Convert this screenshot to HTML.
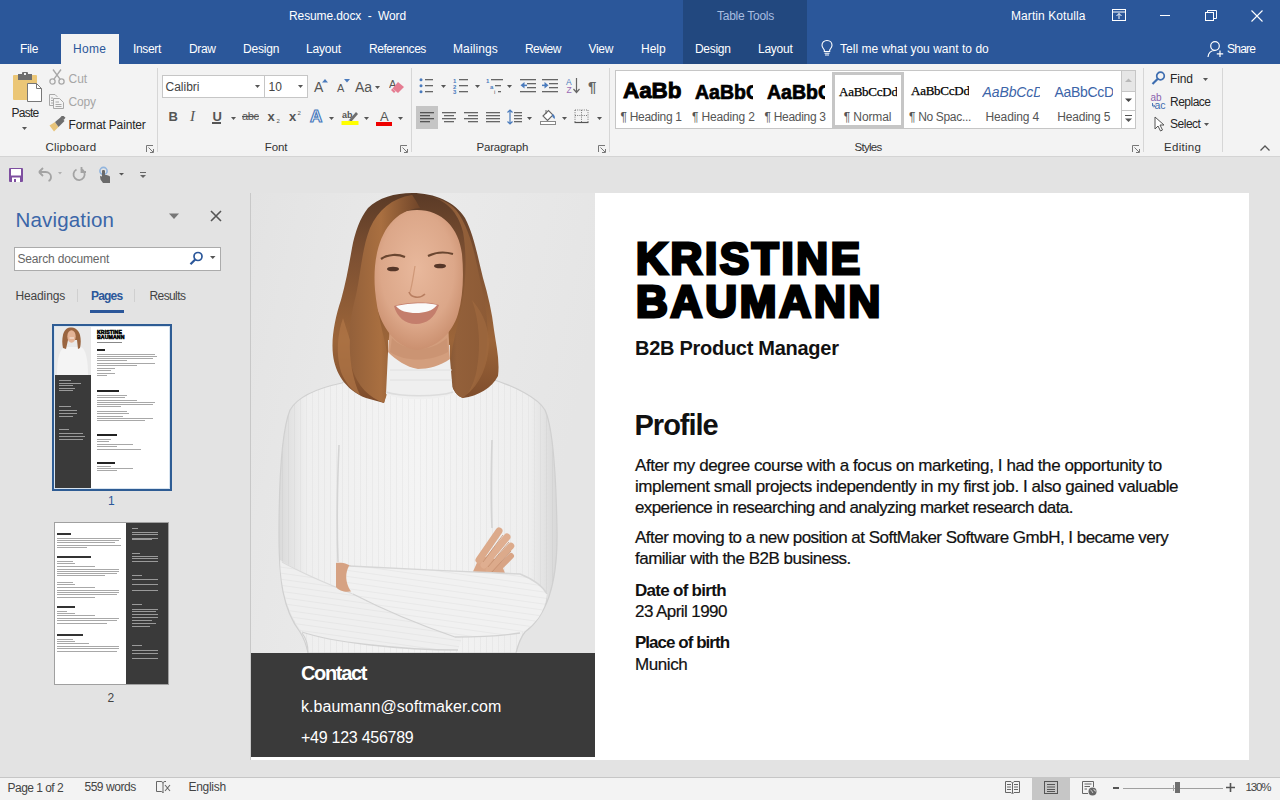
<!DOCTYPE html><html><head><meta charset="utf-8"><style>
html,body{margin:0;padding:0;width:1280px;height:800px;overflow:hidden;position:relative;background:#e3e3e3;font-family:"Liberation Sans",sans-serif;}
.t{position:absolute;white-space:nowrap;font-family:"Liberation Sans",sans-serif;}
.r{position:absolute;display:block;}
</style></head><body>
<div class="r" style="left:0px;top:0px;width:1280px;height:64px;background:#2b579a;"></div>
<div class="r" style="left:683px;top:0px;width:124px;height:64px;background:#22487f;"></div>
<div class="r" style="left:0px;top:64px;width:1280px;height:92px;background:#f3f3f3;"></div>
<div class="r" style="left:0px;top:156px;width:1280px;height:1px;background:#d4d4d4;"></div>
<div class="r" style="left:0px;top:157px;width:1280px;height:620px;background:#e3e3e3;"></div>
<div class="r" style="left:0px;top:777px;width:1280px;height:1px;background:#c6c6c6;"></div>
<div class="r" style="left:0px;top:778px;width:1280px;height:22px;background:#f3f3f3;"></div>
<div class="t" style="left:289px;top:9.84px;font-size:12px;line-height:12px;color:#fff;font-weight:normal;letter-spacing:-0.105px;">Resume.docx&nbsp; -&nbsp; Word</div>
<div class="t" style="left:717px;top:9.84px;font-size:12px;line-height:12px;color:#a8bde0;font-weight:normal;letter-spacing:-0.260px;">Table Tools</div>
<div class="t" style="left:1011px;top:9.84px;font-size:12px;line-height:12px;color:#fff;font-weight:normal;letter-spacing:0.077px;">Martin Kotulla</div>
<svg class="r" style="left:1112px;top:9px;" width="14" height="12" viewBox="0 0 14 12"><rect x="0.5" y="0.5" width="13" height="11" fill="none" stroke="#fff"/><line x1="0.5" y1="3" x2="13.5" y2="3" stroke="#fff"/><path d="M7 4.5 L4.5 7 M7 4.5 L9.5 7 M7 4.5 V10" stroke="#fff" fill="none"/></svg>
<div class="r" style="left:1160px;top:15px;width:10px;height:1px;background:#fff;"></div>
<svg class="r" style="left:1205px;top:10px;" width="12" height="11" viewBox="0 0 12 11"><rect x="0.5" y="2.5" width="8" height="8" fill="none" stroke="#fff"/><path d="M2.5 2.5 V0.5 H11.5 V8.5 H8.5" fill="none" stroke="#fff"/></svg>
<svg class="r" style="left:1251px;top:10px;" width="12" height="12" viewBox="0 0 12 12"><path d="M0.5 0.5 L11.5 11.5 M11.5 0.5 L0.5 11.5" stroke="#fff" stroke-width="1.1"/></svg>
<div class="r" style="left:61px;top:34px;width:58px;height:30px;background:#f3f3f3;"></div>
<div class="t" style="left:20px;top:42.84px;font-size:12px;line-height:12px;color:#fff;font-weight:normal;letter-spacing:-0.333px;">File</div>
<div class="t" style="left:73px;top:42.84px;font-size:12px;line-height:12px;color:#2b579a;font-weight:normal;letter-spacing:0.333px;">Home</div>
<div class="t" style="left:133px;top:42.84px;font-size:12px;line-height:12px;color:#fff;font-weight:normal;letter-spacing:-0.340px;">Insert</div>
<div class="t" style="left:189px;top:42.84px;font-size:12px;line-height:12px;color:#fff;font-weight:normal;letter-spacing:-0.333px;">Draw</div>
<div class="t" style="left:243px;top:42.84px;font-size:12px;line-height:12px;color:#fff;font-weight:normal;letter-spacing:-0.200px;">Design</div>
<div class="t" style="left:306px;top:42.84px;font-size:12px;line-height:12px;color:#fff;font-weight:normal;letter-spacing:-0.200px;">Layout</div>
<div class="t" style="left:369px;top:42.84px;font-size:12px;line-height:12px;color:#fff;font-weight:normal;letter-spacing:-0.444px;">References</div>
<div class="t" style="left:453px;top:42.84px;font-size:12px;line-height:12px;color:#fff;font-weight:normal;letter-spacing:0.105px;">Mailings</div>
<div class="t" style="left:525px;top:42.84px;font-size:12px;line-height:12px;color:#fff;font-weight:normal;letter-spacing:-0.600px;">Review</div>
<div class="t" style="left:588.5px;top:42.84px;font-size:12px;line-height:12px;color:#fff;font-weight:normal;letter-spacing:-0.333px;">View</div>
<div class="t" style="left:641px;top:42.84px;font-size:12px;line-height:12px;color:#fff;font-weight:normal;letter-spacing:0.000px;">Help</div>
<div class="t" style="left:695px;top:42.84px;font-size:12px;line-height:12px;color:#fff;font-weight:normal;letter-spacing:-0.300px;">Design</div>
<div class="t" style="left:758px;top:42.84px;font-size:12px;line-height:12px;color:#fff;font-weight:normal;letter-spacing:-0.250px;">Layout</div>
<svg class="r" style="left:820px;top:39px;" width="14" height="17" viewBox="0 0 14 17"><path d="M7 1.5 C3.8 1.5 2 3.8 2 6.3 C2 8.5 3.6 9.6 4.3 11 V12.5 H9.7 V11 C10.4 9.6 12 8.5 12 6.3 C12 3.8 10.2 1.5 7 1.5 Z" fill="none" stroke="#fff" stroke-width="1.1"/><path d="M4.5 14.2 H9.5 M5 16 H9" stroke="#fff" stroke-width="1.1"/></svg>
<div class="t" style="left:840px;top:42.84px;font-size:12px;line-height:12px;color:#fff;font-weight:normal;letter-spacing:0.027px;">Tell me what you want to do</div>
<svg class="r" style="left:1207px;top:40px;" width="17" height="18" viewBox="0 0 17 18"><circle cx="8" cy="6" r="4.3" fill="none" stroke="#fff" stroke-width="1.2"/><path d="M1 17 C1.5 12.5 4 10.5 8 10.5" fill="none" stroke="#fff" stroke-width="1.2"/><path d="M13 10.5 V17 M9.8 13.8 H16.2" stroke="#fff" stroke-width="1.2"/></svg>
<div class="t" style="left:1227px;top:42.84px;font-size:12px;line-height:12px;color:#fff;font-weight:normal;letter-spacing:-0.750px;">Share</div>
<svg class="r" style="left:12px;top:71px;" width="31" height="32" viewBox="0 0 31 32"><rect x="1" y="4" width="24" height="25" rx="1" fill="#ebc676"/><rect x="6" y="3" width="14" height="6" fill="#6e6e6e"/><rect x="10" y="1" width="6" height="4" rx="1" fill="#6e6e6e"/><rect x="12" y="2" width="2" height="2" fill="#f1f1f1"/><path d="M15.5 12.5 H24.5 L29.5 17.5 V30.5 H15.5 Z" fill="#fff" stroke="#777"/><path d="M24.5 12.5 V17.5 H29.5" fill="none" stroke="#777"/></svg>
<div class="t" style="left:11.5px;top:106.84px;font-size:12px;line-height:12px;color:#262626;font-weight:normal;letter-spacing:-0.750px;">Paste</div>
<svg class="r" style="left:22px;top:127px;" width="5" height="3" viewBox="0 0 5 3"><path d="M0 0 H5 L2.5 3 Z" fill="#555"/></svg>
<svg class="r" style="left:49px;top:69px;" width="16" height="16" viewBox="0 0 16 16"><circle cx="3.5" cy="12.5" r="2.6" fill="none" stroke="#a8a8a8" stroke-width="1.3"/><circle cx="12.5" cy="12.5" r="2.6" fill="none" stroke="#a8a8a8" stroke-width="1.3"/><path d="M4.8 10.3 L12 0.5 M11.2 10.3 L4 0.5" stroke="#a8a8a8" stroke-width="1.4"/></svg>
<div class="t" style="left:68.5px;top:72.84px;font-size:12px;line-height:12px;color:#a6a6a6;font-weight:normal;letter-spacing:0.000px;">Cut</div>
<svg class="r" style="left:48px;top:93px;" width="17" height="16" viewBox="0 0 17 16"><path d="M1.5 1.5 H7 L9 3.5 V4 M1.5 1.5 V12.5 H5" fill="none" stroke="#a8a8a8"/><path d="M5.5 5.5 H11.5 L15.5 9.5 V15.5 H5.5 Z" fill="none" stroke="#a8a8a8"/><path d="M3 5 H5 M3 7.5 H5 M3 10 H5 M7.5 9 H11 M7.5 11.5 H13.5 M7.5 13.5 H13.5" stroke="#a8a8a8"/></svg>
<div class="t" style="left:68.5px;top:95.84px;font-size:12px;line-height:12px;color:#a6a6a6;font-weight:normal;letter-spacing:-0.199px;">Copy</div>
<svg class="r" style="left:49px;top:116px;" width="17" height="16" viewBox="0 0 17 16"><path d="M0.5 9.5 L6 6 L9.5 11 L5 15.5 Z" fill="#e8c47a"/><path d="M6 6 L12 1 L15.5 5 L9.5 11 Z" fill="#6e6e6e"/><rect x="12" y="0" width="4" height="3" fill="#6e6e6e" transform="rotate(40 14 1.5)"/></svg>
<div class="t" style="left:68.5px;top:118.84px;font-size:12px;line-height:12px;color:#262626;font-weight:normal;letter-spacing:-0.154px;">Format Painter</div>
<div class="t" style="left:45.5px;top:142.27px;font-size:11.5px;line-height:11.5px;color:#333;font-weight:normal;letter-spacing:0.175px;">Clipboard</div>
<svg class="r" style="left:146px;top:145px;" width="8" height="8" viewBox="0 0 8 8"><path d="M0.5 7 V0.5 H7" fill="none" stroke="#777"/><path d="M2.5 2.5 L7 7 M4 7.5 H7.5 V4" fill="none" stroke="#777"/></svg>
<div class="r" style="left:157px;top:68px;width:1px;height:84px;background:#d6d6d6;"></div>
<div class="r" style="left:162px;top:75px;width:146px;height:23px;background:#fff;box-sizing:border-box;border:1px solid #c6c6c6;"></div>
<div class="r" style="left:264px;top:75px;width:1px;height:23px;background:#c6c6c6;"></div>
<div class="t" style="left:165.5px;top:80.84px;font-size:12px;line-height:12px;color:#444;font-weight:normal;">Calibri</div>
<svg class="r" style="left:255px;top:85px;" width="5" height="3" viewBox="0 0 5 3"><path d="M0 0 H5 L2.5 3 Z" fill="#555"/></svg>
<div class="t" style="left:268.5px;top:80.84px;font-size:12px;line-height:12px;color:#444;font-weight:normal;">10</div>
<svg class="r" style="left:298px;top:85px;" width="5" height="3" viewBox="0 0 5 3"><path d="M0 0 H5 L2.5 3 Z" fill="#555"/></svg>
<div class="t" style="left:314px;top:80.15px;font-size:14px;line-height:14px;color:#555;font-weight:normal;">A</div>
<svg class="r" style="left:322px;top:79px;" width="6" height="4" viewBox="0 0 6 4"><path d="M0 3.5 L3 0 L6 3.5 Z" fill="#4a7bbd"/></svg>
<div class="t" style="left:337px;top:82.69px;font-size:11px;line-height:11px;color:#555;font-weight:normal;">A</div>
<svg class="r" style="left:343.5px;top:79px;" width="6" height="4" viewBox="0 0 6 4"><path d="M0 0 L6 0 L3 3.5 Z" fill="#4a7bbd"/></svg>
<div class="t" style="left:355px;top:80.15px;font-size:14px;line-height:14px;color:#555;font-weight:normal;">Aa</div>
<svg class="r" style="left:375px;top:85.5px;" width="5" height="3" viewBox="0 0 5 3"><path d="M0 0 H5 L2.5 3 Z" fill="#555"/></svg>
<svg class="r" style="left:389px;top:78px;" width="16" height="16" viewBox="0 0 16 16"><text x="0" y="10" font-family="Liberation Sans" font-size="11" fill="#555">A</text><path d="M9 4 L15 9 L9 15 L3.5 10.5 Z" fill="#e57c91"/><path d="M3.5 10.5 L6.5 13.5 L5 15 L2 12 Z" fill="#e57c91"/></svg>
<div class="r" style="left:411px;top:68px;width:1px;height:84px;background:#d6d6d6;"></div>
<div class="t" style="left:168.5px;top:110.00px;font-size:13px;line-height:13px;color:#555;font-weight:bold;">B</div>
<div class="t" style="left:190px;top:109px;font:italic 15px/15px 'Liberation Serif';color:#555;">I</div>
<div class="t" style="left:212.5px;top:110.00px;font-size:13px;line-height:13px;color:#555;font-weight:bold;">U</div>
<div class="r" style="left:212px;top:122px;width:9px;height:1.5px;background:#555;"></div>
<svg class="r" style="left:231px;top:117px;" width="5" height="3" viewBox="0 0 5 3"><path d="M0 0 H5 L2.5 3 Z" fill="#555"/></svg>
<svg class="r" style="left:242px;top:111px;" width="18" height="11" viewBox="0 0 18 11"><text x="0" y="9" font-family="Liberation Sans" font-size="11" fill="#555" textLength="17">abc</text><path d="M0 5.5 H17" stroke="#555" stroke-width="1.2"/></svg>
<div class="t" style="left:267.5px;top:110.00px;font-size:13px;line-height:13px;color:#555;font-weight:bold;">x</div>
<div class="t" style="left:276.5px;top:118.42px;font-size:6px;line-height:6px;color:#555;font-weight:normal;">2</div>
<div class="t" style="left:289px;top:110.00px;font-size:13px;line-height:13px;color:#555;font-weight:bold;">x</div>
<div class="t" style="left:297.5px;top:110.42px;font-size:6px;line-height:6px;color:#555;font-weight:normal;">2</div>
<svg class="r" style="left:309px;top:108px;" width="16" height="16" viewBox="0 0 16 16"><text x="1" y="14" font-family="Liberation Sans" font-size="17" font-weight="bold" fill="#fff" stroke="#4a7bbd" stroke-width="1.2">A</text></svg>
<svg class="r" style="left:329px;top:116.5px;" width="5" height="3" viewBox="0 0 5 3"><path d="M0 0 H5 L2.5 3 Z" fill="#555"/></svg>
<svg class="r" style="left:341px;top:109px;" width="19" height="17" viewBox="0 0 19 17"><text x="1" y="9" font-family="Liberation Sans" font-size="9" font-weight="bold" fill="#555">ab</text><path d="M8 11 L15 3 L17 5 L10 13 Z" fill="#6e6e6e"/><path d="M7.5 11.5 L9.5 13 L7 13.5 Z" fill="#6e6e6e"/><rect x="0.5" y="12" width="17" height="4" fill="#ffff00"/></svg>
<svg class="r" style="left:364px;top:116.5px;" width="5" height="3" viewBox="0 0 5 3"><path d="M0 0 H5 L2.5 3 Z" fill="#555"/></svg>
<div class="t" style="left:380px;top:110.00px;font-size:13px;line-height:13px;color:#555;font-weight:normal;">A</div>
<div class="r" style="left:376px;top:121.5px;width:16px;height:4px;background:#e00;"></div>
<svg class="r" style="left:398px;top:116.5px;" width="5" height="3" viewBox="0 0 5 3"><path d="M0 0 H5 L2.5 3 Z" fill="#555"/></svg>
<svg class="r" style="left:400px;top:145px;" width="8" height="8" viewBox="0 0 8 8"><path d="M0.5 7 V0.5 H7" fill="none" stroke="#777"/><path d="M2.5 2.5 L7 7 M4 7.5 H7.5 V4" fill="none" stroke="#777"/></svg>
<div class="t" style="left:264.75px;top:142.27px;font-size:11.5px;line-height:11.5px;color:#333;font-weight:normal;letter-spacing:-0.082px;">Font</div>
<svg class="r" style="left:419px;top:78px;" width="15" height="16" viewBox="0 0 15 16"><circle cx="2" cy="1.8" r="1.5" fill="#4a7bbd"/><circle cx="2" cy="7.8" r="1.5" fill="#4a7bbd"/><circle cx="2" cy="13.8" r="1.5" fill="#4a7bbd"/><rect x="6" y="1" width="8" height="1.3" fill="#666"/><rect x="6" y="7" width="8" height="1.3" fill="#666"/><rect x="6" y="13" width="8" height="1.3" fill="#666"/></svg>
<svg class="r" style="left:441px;top:85px;" width="5" height="3" viewBox="0 0 5 3"><path d="M0 0 H5 L2.5 3 Z" fill="#555"/></svg>
<svg class="r" style="left:452px;top:77px;" width="17" height="17" viewBox="0 0 17 17"><text x="1" y="6" font-family="Liberation Sans" font-size="6" font-weight="bold" fill="#4a7bbd">1</text><text x="1" y="12" font-family="Liberation Sans" font-size="6" font-weight="bold" fill="#4a7bbd">2</text><text x="1" y="17" font-family="Liberation Sans" font-size="6" font-weight="bold" fill="#4a7bbd">3</text><rect x="7" y="2" width="9" height="1.3" fill="#666"/><rect x="7" y="8" width="9" height="1.3" fill="#666"/><rect x="7" y="14" width="9" height="1.3" fill="#666"/></svg>
<svg class="r" style="left:475px;top:85px;" width="5" height="3" viewBox="0 0 5 3"><path d="M0 0 H5 L2.5 3 Z" fill="#555"/></svg>
<svg class="r" style="left:486px;top:77px;" width="18" height="17" viewBox="0 0 18 17"><text x="0" y="6" font-family="Liberation Sans" font-size="6" font-weight="bold" fill="#4a7bbd">1</text><text x="4" y="12" font-family="Liberation Sans" font-size="6" font-weight="bold" fill="#4a7bbd">a</text><text x="8" y="17" font-family="Liberation Sans" font-size="6" fill="#555">i</text><rect x="5" y="2" width="12" height="1.3" fill="#666"/><rect x="9" y="8" width="6" height="1.3" fill="#666"/><rect x="12" y="14" width="3" height="1.3" fill="#666"/></svg>
<svg class="r" style="left:507px;top:85px;" width="5" height="3" viewBox="0 0 5 3"><path d="M0 0 H5 L2.5 3 Z" fill="#555"/></svg>
<svg class="r" style="left:520px;top:78px;" width="17" height="15" viewBox="0 0 17 15"><rect x="0" y="1" width="16" height="1.3" fill="#666"/><rect x="7" y="5" width="9" height="1.3" fill="#666"/><rect x="7" y="9" width="9" height="1.3" fill="#666"/><rect x="0" y="13" width="16" height="1.3" fill="#666"/><path d="M0.5 7.3 L4.5 4 V10.5 Z" fill="#4a7bbd"/><rect x="3" y="6.6" width="4" height="1.5" fill="#4a7bbd"/></svg>
<svg class="r" style="left:541.5px;top:78px;" width="17" height="15" viewBox="0 0 17 15"><rect x="0" y="1" width="16" height="1.3" fill="#666"/><rect x="7" y="5" width="9" height="1.3" fill="#666"/><rect x="7" y="9" width="9" height="1.3" fill="#666"/><rect x="0" y="13" width="16" height="1.3" fill="#666"/><path d="M6.5 7.3 L2.5 4 V10.5 Z" fill="#4a7bbd"/><rect x="0" y="6.6" width="4" height="1.5" fill="#4a7bbd"/></svg>
<svg class="r" style="left:565px;top:77px;" width="16" height="17" viewBox="0 0 16 17"><text x="1" y="7.5" font-family="Liberation Sans" font-size="8.5" fill="#4a7bbd">A</text><text x="1.5" y="16" font-family="Liberation Sans" font-size="8.5" fill="#9b6bb5">Z</text><path d="M11.5 1 V15 M8.5 12 L11.5 15.5 L14.5 12" fill="none" stroke="#666" stroke-width="1.2"/></svg>
<div class="t" style="left:588px;top:79.30px;font-size:15px;line-height:15px;color:#666;font-weight:bold;">&#182;</div>
<div class="r" style="left:416px;top:106px;width:22px;height:23px;background:#c5c5c5;"></div>
<svg class="r" style="left:420px;top:112px;" width="15" height="11" viewBox="0 0 15 11"><rect x="0" y="0" width="14" height="1.3" fill="#555"/><rect x="0" y="3" width="10" height="1.3" fill="#555"/><rect x="0" y="6" width="14" height="1.3" fill="#555"/><rect x="0" y="9" width="10" height="1.3" fill="#555"/></svg>
<svg class="r" style="left:442px;top:112px;" width="15" height="11" viewBox="0 0 15 11"><rect x="0" y="0" width="14" height="1.3" fill="#666"/><rect x="2" y="3" width="10" height="1.3" fill="#666"/><rect x="0" y="6" width="14" height="1.3" fill="#666"/><rect x="2" y="9" width="10" height="1.3" fill="#666"/></svg>
<svg class="r" style="left:464px;top:112px;" width="15" height="11" viewBox="0 0 15 11"><rect x="0" y="0" width="14" height="1.3" fill="#666"/><rect x="4" y="3" width="10" height="1.3" fill="#666"/><rect x="0" y="6" width="14" height="1.3" fill="#666"/><rect x="4" y="9" width="10" height="1.3" fill="#666"/></svg>
<svg class="r" style="left:486px;top:112px;" width="15" height="11" viewBox="0 0 15 11"><rect x="0" y="0" width="14" height="1.3" fill="#666"/><rect x="0" y="3" width="14" height="1.3" fill="#666"/><rect x="0" y="6" width="14" height="1.3" fill="#666"/><rect x="0" y="9" width="14" height="1.3" fill="#666"/></svg>
<svg class="r" style="left:507px;top:109px;" width="16" height="17" viewBox="0 0 16 17"><path d="M3 1 V15 M0.5 3.5 L3 1 L5.5 3.5 M0.5 12.5 L3 15 L5.5 12.5" fill="none" stroke="#4a7bbd" stroke-width="1.2"/><rect x="7" y="3" width="8" height="1.3" fill="#666"/><rect x="7" y="6" width="8" height="1.3" fill="#666"/><rect x="7" y="9" width="8" height="1.3" fill="#666"/><rect x="7" y="12" width="8" height="1.3" fill="#666"/></svg>
<svg class="r" style="left:527px;top:116.5px;" width="5" height="3" viewBox="0 0 5 3"><path d="M0 0 H5 L2.5 3 Z" fill="#555"/></svg>
<svg class="r" style="left:539px;top:108px;" width="19" height="18" viewBox="0 0 19 18"><path d="M4 8 L9.5 2.5 L14 7 L8.5 12.5 Z" fill="#fff" stroke="#666" stroke-width="1.1"/><path d="M7 2 V6" stroke="#666"/><path d="M13 6 C15.5 6.5 16.5 9 15.5 11 L13.5 9 Z" fill="#4a7bbd"/><rect x="1.5" y="13.5" width="15" height="3" fill="#fff" stroke="#888"/></svg>
<svg class="r" style="left:562px;top:116.5px;" width="5" height="3" viewBox="0 0 5 3"><path d="M0 0 H5 L2.5 3 Z" fill="#555"/></svg>
<svg class="r" style="left:574px;top:109px;" width="15" height="15" viewBox="0 0 15 15"><path d="M1 1 H14 M1 6.5 H14 M1 1 V13 M7.5 1 V13 M14 1 V13" fill="none" stroke="#777" stroke-dasharray="1 1.2"/><path d="M0.5 13.5 H14.5" stroke="#555" stroke-width="1.2"/></svg>
<svg class="r" style="left:596.5px;top:116.5px;" width="5" height="3" viewBox="0 0 5 3"><path d="M0 0 H5 L2.5 3 Z" fill="#555"/></svg>
<div class="t" style="left:476.6px;top:142.27px;font-size:11.5px;line-height:11.5px;color:#333;font-weight:normal;letter-spacing:-0.250px;">Paragraph</div>
<svg class="r" style="left:598px;top:145px;" width="8" height="8" viewBox="0 0 8 8"><path d="M0.5 7 V0.5 H7" fill="none" stroke="#777"/><path d="M2.5 2.5 L7 7 M4 7.5 H7.5 V4" fill="none" stroke="#777"/></svg>
<div class="r" style="left:609px;top:68px;width:1px;height:84px;background:#d6d6d6;"></div>
<div class="r" style="left:615px;top:70px;width:521px;height:59px;background:#fff;box-sizing:border-box;border:1px solid #c6c6c6;"></div>
<div class="r" style="left:832px;top:72px;width:72px;height:56px;background:transparent;box-sizing:border-box;border:3px solid #c6c6c6;"></div>
<div class="r" style="left:622px;top:76px;width:60px;height:28px;overflow:hidden;"><div class="t" style="left:1px;top:1px;font:bold 22.5px/28px 'Liberation Sans';color:#000;letter-spacing:-0.1px;-webkit-text-stroke:0.9px #000;">AaBb</div></div>
<div class="r" style="left:694px;top:76px;width:59px;height:28px;overflow:hidden;"><div class="t" style="left:1px;top:1.5px;font:bold 19.5px/28px 'Liberation Sans';color:#000;letter-spacing:0px;-webkit-text-stroke:0.7px #000;">AaBbC</div></div>
<div class="r" style="left:766px;top:76px;width:59px;height:28px;overflow:hidden;"><div class="t" style="left:1px;top:1.5px;font:bold 19.5px/28px 'Liberation Sans';color:#000;letter-spacing:0px;-webkit-text-stroke:0.7px #000;">AaBbC</div></div>
<div class="r" style="left:838px;top:80px;width:59px;height:22px;overflow:hidden;"><div class="t" style="left:1px;top:1px;font:13px/22px 'Liberation Serif';color:#000;letter-spacing:-0.25px;-webkit-text-stroke:0.25px #000;">AaBbCcDd</div></div>
<div class="r" style="left:910px;top:80px;width:59px;height:22px;overflow:hidden;"><div class="t" style="left:1px;top:0px;font:13px/22px 'Liberation Serif';color:#000;letter-spacing:-0.25px;-webkit-text-stroke:0.25px #000;">AaBbCcDd</div></div>
<div class="r" style="left:982px;top:80px;width:58px;height:22px;overflow:hidden;"><div class="t" style="left:0.5px;top:0.5px;font:italic 14px/22px 'Liberation Sans';color:#3b64a8;letter-spacing:-0.1px;">AaBbCcD</div></div>
<div class="r" style="left:1054px;top:80px;width:59px;height:22px;overflow:hidden;"><div class="t" style="left:0.5px;top:0.5px;font:14px/22px 'Liberation Sans';color:#3b64a8;letter-spacing:-0.3px;">AaBbCcDd</div></div>
<div class="t" style="left:620.5px;top:111.34px;font-size:12px;line-height:12px;color:#555;font-weight:normal;letter-spacing:-0.300px;">&#182; Heading 1</div>
<div class="t" style="left:692px;top:111.34px;font-size:12px;line-height:12px;color:#555;font-weight:normal;letter-spacing:-0.150px;">&#182; Heading 2</div>
<div class="t" style="left:764.5px;top:111.34px;font-size:12px;line-height:12px;color:#555;font-weight:normal;letter-spacing:-0.300px;">&#182; Heading 3</div>
<div class="t" style="left:843.75px;top:111.34px;font-size:12px;line-height:12px;color:#555;font-weight:normal;letter-spacing:-0.105px;">&#182; Normal</div>
<div class="t" style="left:909px;top:111.34px;font-size:12px;line-height:12px;color:#555;font-weight:normal;letter-spacing:-0.324px;">&#182; No Spac...</div>
<div class="t" style="left:985.5px;top:111.34px;font-size:12px;line-height:12px;color:#555;font-weight:normal;letter-spacing:-0.125px;">Heading 4</div>
<div class="t" style="left:1057.3px;top:111.34px;font-size:12px;line-height:12px;color:#555;font-weight:normal;letter-spacing:-0.208px;">Heading 5</div>
<div class="r" style="left:1121px;top:70px;width:15px;height:59px;background:#fff;box-sizing:border-box;border:1px solid #c6c6c6;"></div>
<div class="r" style="left:1122px;top:71px;width:13px;height:20px;background:#e6e6e6;"></div>
<div class="r" style="left:1121px;top:91px;width:15px;height:1px;background:#c6c6c6;"></div>
<div class="r" style="left:1121px;top:110px;width:15px;height:1px;background:#c6c6c6;"></div>
<svg class="r" style="left:1125px;top:78px;" width="8" height="5" viewBox="0 0 8 5"><path d="M0 4 L3.5 0.5 L7 4 Z" fill="#b8b8b8"/></svg>
<svg class="r" style="left:1125px;top:98px;" width="8" height="5" viewBox="0 0 8 5"><path d="M0 0.5 L7 0.5 L3.5 4 Z" fill="#444"/></svg>
<svg class="r" style="left:1124px;top:115px;" width="9" height="9" viewBox="0 0 9 9"><rect x="1" y="0" width="7" height="1" fill="#555"/><path d="M1 3.5 L8 3.5 L4.5 7 Z" fill="#555"/></svg>
<div class="t" style="left:854.5px;top:142.27px;font-size:11.5px;line-height:11.5px;color:#333;font-weight:normal;letter-spacing:-0.700px;">Styles</div>
<svg class="r" style="left:1132px;top:145px;" width="8" height="8" viewBox="0 0 8 8"><path d="M0.5 7 V0.5 H7" fill="none" stroke="#777"/><path d="M2.5 2.5 L7 7 M4 7.5 H7.5 V4" fill="none" stroke="#777"/></svg>
<div class="r" style="left:1143px;top:68px;width:1px;height:84px;background:#d6d6d6;"></div>
<svg class="r" style="left:1151px;top:71px;" width="15" height="14" viewBox="0 0 15 14"><circle cx="9.5" cy="5" r="3.8" fill="none" stroke="#3d6db0" stroke-width="1.7"/><path d="M6.8 7.8 L1.5 13" stroke="#3d6db0" stroke-width="2.2"/></svg>
<div class="t" style="left:1170px;top:73.34px;font-size:12px;line-height:12px;color:#262626;font-weight:normal;letter-spacing:-0.099px;">Find</div>
<svg class="r" style="left:1202.5px;top:77.5px;" width="5" height="3" viewBox="0 0 5 3"><path d="M0 0 H5 L2.5 3 Z" fill="#555"/></svg>
<svg class="r" style="left:1150px;top:93px;" width="18" height="17" viewBox="0 0 18 17"><text x="0.5" y="8" font-family="Liberation Sans" font-size="10" fill="#8a62ad">ab</text><text x="4.5" y="16" font-family="Liberation Sans" font-size="10.5" fill="#3d6db0">ac</text><path d="M2.5 10 V13 H4.5 M3.5 12 L4.8 13 L3.5 14" fill="none" stroke="#3d6db0" stroke-width="0.9"/></svg>
<div class="t" style="left:1170px;top:95.84px;font-size:12px;line-height:12px;color:#262626;font-weight:normal;letter-spacing:-0.500px;">Replace</div>
<svg class="r" style="left:1154px;top:116px;" width="11" height="16" viewBox="0 0 11 16"><path d="M1 1 V13 L4 10 L6.5 15 L8.5 14 L6 9 H10 Z" fill="#fff" stroke="#555" stroke-width="1"/></svg>
<div class="t" style="left:1170px;top:118.34px;font-size:12px;line-height:12px;color:#262626;font-weight:normal;letter-spacing:-0.480px;">Select</div>
<svg class="r" style="left:1204px;top:123px;" width="5" height="3" viewBox="0 0 5 3"><path d="M0 0 H5 L2.5 3 Z" fill="#555"/></svg>
<div class="t" style="left:1164px;top:142.27px;font-size:11.5px;line-height:11.5px;color:#333;font-weight:normal;letter-spacing:0.283px;">Editing</div>
<div class="r" style="left:1222px;top:68px;width:1px;height:84px;background:#d6d6d6;"></div>
<svg class="r" style="left:1260px;top:145px;" width="10" height="6" viewBox="0 0 10 6"><path d="M0.5 5.5 L5 1 L9.5 5.5" fill="none" stroke="#555" stroke-width="1.3"/></svg>
<svg class="r" style="left:9px;top:168px;" width="15" height="14" viewBox="0 0 15 14"><rect x="0" y="0" width="14" height="14" rx="1" fill="#7e4fa0"/><rect x="2" y="1" width="10" height="6.5" fill="#fff"/><rect x="3" y="9.5" width="8" height="4.5" fill="#fff"/><rect x="5" y="11" width="2" height="3" fill="#7e4fa0"/></svg>
<svg class="r" style="left:37px;top:167px;" width="16" height="15" viewBox="0 0 16 15"><path d="M2 5 L6 1 M2 5 L6 9" fill="none" stroke="#a3a3a3" stroke-width="1.8"/><path d="M2.5 5 H8.5 C12 5 14 7.5 14 10 C14 12 13 13.5 11.5 14" fill="none" stroke="#a3a3a3" stroke-width="1.8"/></svg>
<svg class="r" style="left:58px;top:172px;" width="5" height="3" viewBox="0 0 5 3"><path d="M0 0 H4 L2 2.5 Z" fill="#b0b0b0"/></svg>
<svg class="r" style="left:72px;top:167px;" width="15" height="15" viewBox="0 0 15 15"><path d="M9 2.2 A5.6 5.6 0 1 1 4.5 2.5" fill="none" stroke="#a3a3a3" stroke-width="1.8"/><path d="M9.5 0 V5 H14" fill="none" stroke="#a3a3a3" stroke-width="1.8"/></svg>
<svg class="r" style="left:98px;top:166px;" width="14" height="17" viewBox="0 0 14 17"><circle cx="5.5" cy="5" r="3.6" fill="none" stroke="#92b5de" stroke-width="1.6"/><path d="M4 5 V10.5 L2 10 L2.5 13.5 L5 17 H12 V11 C12 9.5 8.5 9 7 9 V5 C7 3.8 4 3.8 4 5 Z" fill="#6a6a6a"/></svg>
<svg class="r" style="left:119px;top:173px;" width="6" height="3" viewBox="0 0 6 3"><path d="M0 0 H5 L2.5 2.5 Z" fill="#555"/></svg>
<svg class="r" style="left:140px;top:172px;" width="6" height="7" viewBox="0 0 6 7"><rect x="0" y="0" width="6" height="1" fill="#666"/><path d="M0 3 H6 L3 6 Z" fill="#666"/></svg>
<div class="t" style="left:15.5px;top:210.15px;font-size:20.5px;line-height:20.5px;color:#3b66a8;font-weight:normal;letter-spacing:0.175px;">Navigation</div>
<svg class="r" style="left:169px;top:213px;" width="11" height="7" viewBox="0 0 11 7"><path d="M0 0.5 H10 L5 6 Z" fill="#777"/></svg>
<svg class="r" style="left:210px;top:210px;" width="12" height="12" viewBox="0 0 12 12"><path d="M1 1 L11 11 M11 1 L1 11" stroke="#555" stroke-width="1.6"/></svg>
<div class="r" style="left:14px;top:247px;width:207px;height:24px;background:#fff;box-sizing:border-box;border:1px solid #ababab;"></div>
<div class="t" style="left:17.5px;top:252.84px;font-size:12px;line-height:12px;color:#666;font-weight:normal;letter-spacing:-0.167px;">Search document</div>
<svg class="r" style="left:189px;top:251px;" width="15" height="15" viewBox="0 0 15 15"><circle cx="9" cy="5.5" r="4" fill="none" stroke="#2b579a" stroke-width="1.7"/><path d="M6.2 8.5 L1.5 13.3" stroke="#2b579a" stroke-width="2.2"/></svg>
<svg class="r" style="left:210px;top:256px;" width="6" height="4" viewBox="0 0 6 4"><path d="M0 0 H5.5 L2.75 3 Z" fill="#555"/></svg>
<div class="t" style="left:15.5px;top:290.34px;font-size:12px;line-height:12px;color:#444;font-weight:normal;letter-spacing:-0.143px;">Headings</div>
<div class="t" style="left:91px;top:290.34px;font-size:12px;line-height:12px;color:#2b579a;font-weight:bold;letter-spacing:-0.825px;">Pages</div>
<div class="t" style="left:149.5px;top:290.34px;font-size:12px;line-height:12px;color:#444;font-weight:normal;letter-spacing:-0.602px;">Results</div>
<div class="r" style="left:77px;top:289px;width:1px;height:13px;background:#d0d0d0;"></div>
<div class="r" style="left:134px;top:289px;width:1px;height:13px;background:#d0d0d0;"></div>
<div class="r" style="left:90px;top:310px;width:34px;height:3px;background:#2b579a;"></div>
<div class="r" style="left:52px;top:324px;width:120px;height:167px;background:#2e5c94;"></div>
<div class="r" style="left:54px;top:326px;width:116px;height:163px;background:#d8e4f0;"></div>
<div class="r" style="left:55px;top:327px;width:114px;height:161px;background:#fff;"></div>
<div class="r" style="left:55px;top:375px;width:36px;height:113px;background:#3a3a3a;"></div>
<div class="r" style="left:55px;top:327px;width:36px;height:48px;background:#ececec;"></div>
<svg class="r" style="left:55px;top:327px;" width="36" height="48" viewBox="0 0 36 48"><rect width="36" height="48" fill="#e9e9e9"/><path d="M2 48 C2 34 4 22 10 20 H26 C31 22 33 34 33 48 Z" fill="#f4f4f4"/><path d="M15 0.5 C11 1 9 4 8 8 C7 12 7 17 8 21 L11 22 L13 13 L22 13 L23 22 L25 21 C26 17 26 12 25 8 C24 4 21 1 17 0.5 Z" fill="#9a6540"/><ellipse cx="16.5" cy="9.5" rx="4.2" ry="6.2" fill="#e4b396"/><path d="M14.5 11 H19" stroke="#fff" stroke-width="0.8"/></svg>
<div class="t" style="left:97px;top:329.5px;font:bold 5.2px/5px 'Liberation Sans';color:#000;letter-spacing:0.1px;-webkit-text-stroke:0.5px #000;">KRISTINE<br>BAUMANN</div>
<div class="r" style="left:97px;top:342px;width:25px;height:1px;background:#888;"></div>
<div class="r" style="left:97px;top:349px;width:8px;height:2px;background:#222;"></div>
<div class="r" style="left:97px;top:354px;width:58px;height:1px;background:#a8a8a8;"></div>
<div class="r" style="left:97px;top:356px;width:60px;height:1px;background:#a8a8a8;"></div>
<div class="r" style="left:97px;top:358px;width:56px;height:1px;background:#a8a8a8;"></div>
<div class="r" style="left:97px;top:360px;width:30px;height:1px;background:#a8a8a8;"></div>
<div class="r" style="left:97px;top:363px;width:58px;height:1px;background:#a8a8a8;"></div>
<div class="r" style="left:97px;top:365px;width:40px;height:1px;background:#a8a8a8;"></div>
<div class="r" style="left:97px;top:368px;width:18px;height:1px;background:#a8a8a8;"></div>
<div class="r" style="left:97px;top:370px;width:14px;height:1px;background:#a8a8a8;"></div>
<div class="r" style="left:97px;top:373px;width:18px;height:1px;background:#a8a8a8;"></div>
<div class="r" style="left:97px;top:375px;width:10px;height:1px;background:#a8a8a8;"></div>
<div class="r" style="left:97px;top:390px;width:22px;height:2px;background:#222;"></div>
<div class="r" style="left:97px;top:395px;width:30px;height:1px;background:#a8a8a8;"></div>
<div class="r" style="left:97px;top:397px;width:28px;height:1px;background:#a8a8a8;"></div>
<div class="r" style="left:97px;top:400px;width:40px;height:1px;background:#a8a8a8;"></div>
<div class="r" style="left:97px;top:402px;width:58px;height:1px;background:#a8a8a8;"></div>
<div class="r" style="left:97px;top:404px;width:56px;height:1px;background:#a8a8a8;"></div>
<div class="r" style="left:97px;top:406px;width:24px;height:1px;background:#a8a8a8;"></div>
<div class="r" style="left:97px;top:411px;width:30px;height:1px;background:#a8a8a8;"></div>
<div class="r" style="left:97px;top:413px;width:32px;height:1px;background:#a8a8a8;"></div>
<div class="r" style="left:97px;top:416px;width:26px;height:1px;background:#a8a8a8;"></div>
<div class="r" style="left:97px;top:418px;width:56px;height:1px;background:#a8a8a8;"></div>
<div class="r" style="left:97px;top:420px;width:48px;height:1px;background:#a8a8a8;"></div>
<div class="r" style="left:97px;top:434px;width:20px;height:2px;background:#222;"></div>
<div class="r" style="left:97px;top:439px;width:14px;height:1px;background:#a8a8a8;"></div>
<div class="r" style="left:97px;top:441px;width:12px;height:1px;background:#a8a8a8;"></div>
<div class="r" style="left:97px;top:444px;width:36px;height:1px;background:#a8a8a8;"></div>
<div class="r" style="left:97px;top:446px;width:20px;height:1px;background:#a8a8a8;"></div>
<div class="r" style="left:97px;top:449px;width:44px;height:1px;background:#a8a8a8;"></div>
<div class="r" style="left:97px;top:462px;width:18px;height:2px;background:#222;"></div>
<div class="r" style="left:97px;top:466px;width:14px;height:1px;background:#a8a8a8;"></div>
<div class="r" style="left:97px;top:468px;width:36px;height:1px;background:#a8a8a8;"></div>
<div class="r" style="left:97px;top:470px;width:20px;height:1px;background:#a8a8a8;"></div>
<div class="r" style="left:59px;top:380px;width:12px;height:1px;background:#9a9a9a;"></div>
<div class="r" style="left:59px;top:383px;width:22px;height:1px;background:#9a9a9a;"></div>
<div class="r" style="left:59px;top:385px;width:14px;height:1px;background:#9a9a9a;"></div>
<div class="r" style="left:59px;top:388px;width:16px;height:1px;background:#9a9a9a;"></div>
<div class="r" style="left:59px;top:390px;width:14px;height:1px;background:#9a9a9a;"></div>
<div class="r" style="left:59px;top:406px;width:12px;height:1px;background:#9a9a9a;"></div>
<div class="r" style="left:59px;top:410px;width:18px;height:1px;background:#9a9a9a;"></div>
<div class="r" style="left:59px;top:413px;width:18px;height:1px;background:#9a9a9a;"></div>
<div class="r" style="left:59px;top:416px;width:14px;height:1px;background:#9a9a9a;"></div>
<div class="r" style="left:59px;top:429px;width:10px;height:1px;background:#9a9a9a;"></div>
<div class="r" style="left:59px;top:433px;width:24px;height:1px;background:#9a9a9a;"></div>
<div class="r" style="left:59px;top:436px;width:26px;height:1px;background:#9a9a9a;"></div>
<div class="r" style="left:59px;top:439px;width:24px;height:1px;background:#9a9a9a;"></div>
<div class="t" style="left:108px;top:495.34px;font-size:12px;line-height:12px;color:#2b579a;font-weight:normal;">1</div>
<div class="r" style="left:54px;top:522px;width:115px;height:163px;background:#a0a0a0;"></div>
<div class="r" style="left:55px;top:523px;width:113px;height:161px;background:#fff;"></div>
<div class="r" style="left:126px;top:523px;width:42px;height:161px;background:#3a3a3a;"></div>
<div class="r" style="left:57px;top:533px;width:14px;height:2px;background:#333;"></div>
<div class="r" style="left:57px;top:538px;width:64px;height:1px;background:#a8a8a8;"></div>
<div class="r" style="left:57px;top:540px;width:62px;height:1px;background:#a8a8a8;"></div>
<div class="r" style="left:57px;top:542px;width:58px;height:1px;background:#a8a8a8;"></div>
<div class="r" style="left:57px;top:545px;width:64px;height:1px;background:#a8a8a8;"></div>
<div class="r" style="left:57px;top:547px;width:30px;height:1px;background:#a8a8a8;"></div>
<div class="r" style="left:57px;top:556px;width:34px;height:2px;background:#333;"></div>
<div class="r" style="left:57px;top:561px;width:16px;height:1px;background:#a8a8a8;"></div>
<div class="r" style="left:57px;top:563px;width:18px;height:1px;background:#a8a8a8;"></div>
<div class="r" style="left:57px;top:566px;width:38px;height:1px;background:#a8a8a8;"></div>
<div class="r" style="left:57px;top:569px;width:62px;height:1px;background:#a8a8a8;"></div>
<div class="r" style="left:57px;top:571px;width:62px;height:1px;background:#a8a8a8;"></div>
<div class="r" style="left:57px;top:573px;width:60px;height:1px;background:#a8a8a8;"></div>
<div class="r" style="left:57px;top:575px;width:48px;height:1px;background:#a8a8a8;"></div>
<div class="r" style="left:57px;top:582px;width:16px;height:1px;background:#a8a8a8;"></div>
<div class="r" style="left:57px;top:584px;width:18px;height:1px;background:#a8a8a8;"></div>
<div class="r" style="left:57px;top:587px;width:38px;height:1px;background:#a8a8a8;"></div>
<div class="r" style="left:57px;top:590px;width:62px;height:1px;background:#a8a8a8;"></div>
<div class="r" style="left:57px;top:592px;width:62px;height:1px;background:#a8a8a8;"></div>
<div class="r" style="left:57px;top:594px;width:60px;height:1px;background:#a8a8a8;"></div>
<div class="r" style="left:57px;top:597px;width:38px;height:1px;background:#a8a8a8;"></div>
<div class="r" style="left:57px;top:606px;width:18px;height:2px;background:#333;"></div>
<div class="r" style="left:57px;top:611px;width:10px;height:1px;background:#a8a8a8;"></div>
<div class="r" style="left:57px;top:613px;width:18px;height:1px;background:#a8a8a8;"></div>
<div class="r" style="left:57px;top:615px;width:38px;height:1px;background:#a8a8a8;"></div>
<div class="r" style="left:57px;top:618px;width:62px;height:1px;background:#a8a8a8;"></div>
<div class="r" style="left:57px;top:620px;width:60px;height:1px;background:#a8a8a8;"></div>
<div class="r" style="left:57px;top:623px;width:50px;height:1px;background:#a8a8a8;"></div>
<div class="r" style="left:57px;top:634px;width:26px;height:2px;background:#333;"></div>
<div class="r" style="left:57px;top:639px;width:16px;height:1px;background:#a8a8a8;"></div>
<div class="r" style="left:57px;top:641px;width:18px;height:1px;background:#a8a8a8;"></div>
<div class="r" style="left:57px;top:643px;width:32px;height:1px;background:#a8a8a8;"></div>
<div class="r" style="left:57px;top:646px;width:62px;height:1px;background:#a8a8a8;"></div>
<div class="r" style="left:57px;top:648px;width:62px;height:1px;background:#a8a8a8;"></div>
<div class="r" style="left:57px;top:651px;width:60px;height:1px;background:#a8a8a8;"></div>
<div class="r" style="left:132px;top:528px;width:6px;height:1px;background:#9a9a9a;"></div>
<div class="r" style="left:132px;top:532px;width:26px;height:1px;background:#9a9a9a;"></div>
<div class="r" style="left:132px;top:534px;width:26px;height:1px;background:#9a9a9a;"></div>
<div class="r" style="left:132px;top:538px;width:26px;height:1px;background:#9a9a9a;"></div>
<div class="r" style="left:132px;top:539px;width:20px;height:1px;background:#9a9a9a;"></div>
<div class="r" style="left:132px;top:553px;width:8px;height:1px;background:#9a9a9a;"></div>
<div class="r" style="left:132px;top:556px;width:26px;height:1px;background:#9a9a9a;"></div>
<div class="r" style="left:132px;top:558px;width:26px;height:1px;background:#9a9a9a;"></div>
<div class="r" style="left:132px;top:561px;width:26px;height:1px;background:#9a9a9a;"></div>
<div class="r" style="left:132px;top:575px;width:10px;height:1px;background:#9a9a9a;"></div>
<div class="r" style="left:132px;top:579px;width:26px;height:1px;background:#9a9a9a;"></div>
<div class="r" style="left:132px;top:584px;width:26px;height:1px;background:#9a9a9a;"></div>
<div class="r" style="left:132px;top:590px;width:26px;height:1px;background:#9a9a9a;"></div>
<div class="r" style="left:132px;top:604px;width:10px;height:1px;background:#9a9a9a;"></div>
<div class="r" style="left:132px;top:609px;width:26px;height:1px;background:#9a9a9a;"></div>
<div class="r" style="left:132px;top:611px;width:24px;height:1px;background:#9a9a9a;"></div>
<div class="r" style="left:132px;top:614px;width:26px;height:1px;background:#9a9a9a;"></div>
<div class="r" style="left:132px;top:617px;width:26px;height:1px;background:#9a9a9a;"></div>
<div class="r" style="left:132px;top:620px;width:20px;height:1px;background:#9a9a9a;"></div>
<div class="r" style="left:132px;top:623px;width:24px;height:1px;background:#9a9a9a;"></div>
<div class="r" style="left:132px;top:626px;width:18px;height:1px;background:#9a9a9a;"></div>
<div class="r" style="left:132px;top:645px;width:10px;height:1px;background:#9a9a9a;"></div>
<div class="r" style="left:132px;top:650px;width:26px;height:1px;background:#9a9a9a;"></div>
<div class="r" style="left:132px;top:653px;width:26px;height:1px;background:#9a9a9a;"></div>
<div class="r" style="left:132px;top:658px;width:26px;height:1px;background:#9a9a9a;"></div>
<div class="t" style="left:107.5px;top:691.84px;font-size:12px;line-height:12px;color:#444;font-weight:normal;">2</div>
<div class="r" style="left:250px;top:193px;width:999px;height:567px;background:#fff;"></div>
<div class="r" style="left:250px;top:193px;width:1px;height:567px;background:#c8c8c8;"></div>
<div class="r" style="left:251px;top:653px;width:344px;height:104px;background:#3a3a3a;"></div>
<svg class="r" style="left:251px;top:193px;" width="344" height="460" viewBox="251 193 344 460">
<defs>
<linearGradient id="bgG" x1="0" y1="0" x2="1" y2="0.3"><stop offset="0" stop-color="#e3e3e3"/><stop offset="0.5" stop-color="#eaeaea"/><stop offset="1" stop-color="#e5e5e5"/></linearGradient>
<linearGradient id="hairG" x1="0" y1="0" x2="0" y2="1"><stop offset="0" stop-color="#5a3a26"/><stop offset="0.3" stop-color="#7d5032"/><stop offset="0.7" stop-color="#9c6539"/><stop offset="1" stop-color="#7c4b2b"/></linearGradient>
<linearGradient id="hairL" x1="0" y1="0" x2="1" y2="0"><stop offset="0" stop-color="#93603a"/><stop offset="0.45" stop-color="#a96f40"/><stop offset="1" stop-color="#704529"/></linearGradient>
<linearGradient id="hairR" x1="0" y1="0" x2="1" y2="0"><stop offset="0" stop-color="#62402a"/><stop offset="0.5" stop-color="#93603a"/><stop offset="1" stop-color="#8d5b36"/></linearGradient>
<radialGradient id="faceG" cx="0.5" cy="0.42" r="0.62"><stop offset="0" stop-color="#e8b89c"/><stop offset="0.65" stop-color="#dca789"/><stop offset="1" stop-color="#c78b6a"/></radialGradient>
<linearGradient id="swG" x1="0" y1="0" x2="1" y2="0"><stop offset="0" stop-color="#dadada"/><stop offset="0.1" stop-color="#efefef"/><stop offset="0.5" stop-color="#f4f4f4"/><stop offset="0.9" stop-color="#eeeeee"/><stop offset="1" stop-color="#d8d8d8"/></linearGradient>
<pattern id="rib" width="6" height="10" patternUnits="userSpaceOnUse"><rect x="0" width="1" height="10" fill="#000" opacity="0.03"/></pattern>
<pattern id="ribH" width="10" height="6" patternUnits="userSpaceOnUse" patternTransform="rotate(8)"><rect y="0" width="10" height="1" fill="#000" opacity="0.035"/></pattern>
</defs>
<rect x="251" y="193" width="344" height="460" fill="url(#bgG)"/>
<!-- torso + arms silhouette -->
<path d="M342 383 C318 388 298 396 290 410 C282 430 279 480 279 535 C279 580 283 610 300 632 C305 640 307 648 308 653 H516 C518 645 520 638 525 632 C548 615 558 580 557 530 C556 470 552 425 545 410 C538 398 515 386 488 378 L451 360 C438 366 428 368 418 367 C405 365 396 358 387 350 Z" fill="url(#swG)"/>
<path d="M342 383 C318 388 298 396 290 410 C282 430 279 480 279 535 C279 580 283 610 300 632 C305 640 307 648 308 653 H516 C518 645 520 638 525 632 C548 615 558 580 557 530 C556 470 552 425 545 410 C538 398 515 386 488 378 L451 360 C438 366 428 368 418 367 C405 365 396 358 387 350 Z" fill="url(#rib)"/>
<path d="M342 383 C318 388 298 396 290 410 C282 430 279 480 279 535 C279 580 283 610 300 632 C305 640 307 648 308 653 H516 C518 645 520 638 525 632 C548 615 558 580 557 530 C556 470 552 425 545 410 C538 398 515 386 488 378 L451 360 C438 366 428 368 418 367 C405 365 396 358 387 350 Z" fill="none" stroke="#d0d0d0" stroke-width="1.2"/>
<!-- arm/torso contour lines -->
<path d="M339 445 C337 490 337 535 338 562" fill="none" stroke="#d4d4d4" stroke-width="1.6"/>
<path d="M492 440 C491 475 491 505 492 528" fill="none" stroke="#d4d4d4" stroke-width="1.6"/>
<path d="M308 653 C308 645 306 638 302 633" fill="none" stroke="#d0d0d0" stroke-width="1.2"/>
<!-- lower arm band -->
<path d="M280 560 C281 590 288 615 302 632 C330 642 400 650 458 650 L462 638 C420 625 380 610 353 594 C330 585 300 572 280 560 Z" fill="#efefef"/>
<path d="M280 560 C281 590 288 615 302 632 C330 642 400 650 458 650 L462 638 C420 625 380 610 353 594 C330 585 300 572 280 560 Z" fill="url(#ribH)"/>
<path d="M302 632 C330 642 400 650 458 650" fill="none" stroke="#d2d2d2" stroke-width="1.3"/><path d="M282 562 C300 572 330 585 353 594" fill="none" stroke="#dadada" stroke-width="1.2"/>
<!-- hair back -->
<path d="M412 193 C395 193 378 198 368 208 C360 218 355 232 352 248 C349 265 346 282 341 300 C335 318 331 338 333 355 C335 372 345 390 366 398 L384 403 C388 390 389 375 388 360 L388 340 L450 345 L450 380 C452 390 458 397 463 398 C478 396 492 388 498 376 C500 360 496 345 494 330 C492 312 488 295 483 278 C478 258 474 235 465 218 C455 202 435 193 412 193 Z" fill="url(#hairG)"/>
<!-- neck -->
<path d="M390 322 L448 322 L450 361 C440 367 428 370 418 370 C405 368 396 361 388 353 Z" fill="#d39e7d"/>
<path d="M392 338 C405 352 430 353 447 338 L448 352 C430 362 405 362 390 352 Z" fill="#c48c6b" opacity="0.55"/>
<!-- face -->
<path d="M417 210 C392 210 374 228 372 255 C371 278 373 298 379 314 C386 334 400 348 417 350 C436 348 452 334 458 314 C463 297 464 276 462 254 C459 228 442 210 417 210 Z" fill="url(#faceG)"/>
<!-- front hair strands -->
<path d="M412 195 C392 198 378 210 370 228 C362 248 361 272 356 295 C350 318 346 345 352 368 C357 386 370 398 384 403 C390 388 390 370 387 352 C383 332 377 312 375 290 C373 265 377 240 390 224 C398 214 408 209 420 208 C416 201 414 197 412 195 Z" fill="url(#hairL)"/>
<path d="M426 196 C446 199 458 212 463 232 C467 255 466 282 462 304 C458 326 451 346 450 370 C450 385 455 396 463 398 C476 386 485 368 487 345 C489 322 485 300 480 280 C475 255 470 228 456 210 C448 201 437 197 426 196 Z" fill="url(#hairR)"/>
<path d="M343 318 C337 335 336 355 341 372 C345 382 351 390 360 395 C353 380 349 360 350 340 Z" fill="#b07647" opacity="0.7"/>
<path d="M472 300 C479 320 481 345 477 368 C475 380 471 390 465 396 C480 385 488 365 489 345 C489 330 485 315 472 300 Z" fill="#a06a3e" opacity="0.7"/>
<!-- eyebrows eyes -->
<path d="M381 259 C388 254 398 254 405 257" fill="none" stroke="#6a4630" stroke-width="2.2"/>
<path d="M428 256 C436 252 446 252 453 254" fill="none" stroke="#6a4630" stroke-width="2.2"/>
<ellipse cx="393" cy="269" rx="6" ry="2.3" fill="#553628"/>
<ellipse cx="440" cy="266" rx="6" ry="2.3" fill="#553628"/>
<!-- nose -->
<path d="M409 292 C411 298 420 299 425 294" fill="none" stroke="#b87e60" stroke-width="1.6"/>
<path d="M415 266 C413 278 412 286 410 292" fill="none" stroke="#cf9878" stroke-width="1.2"/>
<!-- mouth -->
<path d="M394 306 C405 302 429 301 439 305 C435 318 426 324 416 324 C405 324 397 317 394 306 Z" fill="#c47e6c"/>
<path d="M396 306 C407 303 428 302 437 305 C433 311 424 313 416 313 C407 313 400 311 396 306 Z" fill="#fafafa"/>
<!-- turtleneck -->
<path d="M388 352 C396 360 406 367 418 369 C428 369 440 366 450 359 L453 394 C440 399 420 400 408 399 C398 398 390 396 386 394 Z" fill="#efefef"/><path d="M390 370 H452 M390 380 H452" stroke="#e0e0e0" stroke-width="1"/>
<path d="M386 392 C400 397 438 397 453 392" fill="none" stroke="#dcdcdc" stroke-width="1.5"/>
<!-- hands -->
<path d="M471 576 L480 556 L500 560 L506 576 Z" fill="#d9a586"/>
<path d="M479 560 L499 531" stroke="#dcaa8b" stroke-width="7" stroke-linecap="round"/>
<path d="M484 565 L507 537" stroke="#dfae90" stroke-width="7" stroke-linecap="round"/>
<path d="M489 570 L511 546" stroke="#dcaa8b" stroke-width="6.5" stroke-linecap="round"/>
<path d="M493 574 L511 556" stroke="#d8a485" stroke-width="6" stroke-linecap="round"/>
<path d="M483 562 L503 535 M488 567 L509 542 M492 572 L511 551" stroke="#c48f70" stroke-width="0.8"/>
<path d="M336 563 C342 562 350 564 353 568 L353 591 C346 593 339 591 336 587 Z" fill="#d6a283"/>
<!-- top forearm band -->
<path d="M349 566 C390 568 470 572 520 574 C530 578 542 585 547 594 C545 612 535 626 520 633 C500 636 470 637 455 637 C420 625 380 608 353 594 C346 586 344 575 349 566 Z" fill="#f1f1f1"/>
<path d="M349 566 C390 568 470 572 520 574 C530 578 542 585 547 594 C545 612 535 626 520 633 C500 636 470 637 455 637 C420 625 380 608 353 594 C346 586 344 575 349 566 Z" fill="url(#ribH)"/>
<path d="M349 566 C390 568 470 572 520 574 C530 578 542 585 547 594" fill="none" stroke="#d6d6d6" stroke-width="1.4"/>
<path d="M353 594 C380 608 420 625 455 637 C470 637 500 636 520 633" fill="none" stroke="#d2d2d2" stroke-width="1.3"/>
</svg>

<div class="t" style="left:301px;top:663.07px;font-size:20px;line-height:20px;color:#fff;font-weight:bold;letter-spacing:-1.348px;">Contact</div>
<div class="t" style="left:301px;top:698.96px;font-size:16px;line-height:16px;color:#fff;font-weight:normal;letter-spacing:0.037px;">k.baumann@softmaker.com</div>
<div class="t" style="left:301px;top:729.96px;font-size:16px;line-height:16px;color:#fff;font-weight:normal;letter-spacing:-0.260px;">+49 123 456789</div>
<div class="t" style="left:636px;top:236.75px;font-size:44px;line-height:44px;color:#000;font-weight:bold;-webkit-text-stroke:3px #000;letter-spacing:2.685px;">KRISTINE</div>
<div class="t" style="left:636px;top:279.95px;font-size:44px;line-height:44px;color:#000;font-weight:bold;-webkit-text-stroke:3px #000;letter-spacing:2.833px;">BAUMANN</div>
<div class="t" style="left:635px;top:338.07px;font-size:20px;line-height:20px;color:#111;font-weight:bold;letter-spacing:-0.278px;">B2B Product Manager</div>
<div class="t" style="left:634.5px;top:410.95px;font-size:29px;line-height:29px;color:#111;font-weight:bold;letter-spacing:-1.000px;">Profile</div>
<div class="t" style="left:635px;top:456.61px;font-size:17px;line-height:17px;color:#111;font-weight:normal;-webkit-text-stroke:0.2px #111;letter-spacing:-0.417px;">After my degree course with a focus on marketing, I had the opportunity to</div>
<div class="t" style="left:635px;top:477.61px;font-size:17px;line-height:17px;color:#111;font-weight:normal;-webkit-text-stroke:0.2px #111;letter-spacing:-0.428px;">implement small projects independently in my first job. I also gained valuable</div>
<div class="t" style="left:635px;top:498.61px;font-size:17px;line-height:17px;color:#111;font-weight:normal;-webkit-text-stroke:0.2px #111;letter-spacing:-0.600px;">experience in researching and analyzing market research data.</div>
<div class="t" style="left:635px;top:529.11px;font-size:17px;line-height:17px;color:#111;font-weight:normal;-webkit-text-stroke:0.2px #111;letter-spacing:-0.519px;">After moving to a new position at SoftMaker Software GmbH, I became very</div>
<div class="t" style="left:635px;top:550.11px;font-size:17px;line-height:17px;color:#111;font-weight:normal;-webkit-text-stroke:0.2px #111;letter-spacing:-0.505px;">familiar with the B2B business.</div>
<div class="t" style="left:635px;top:582.11px;font-size:17px;line-height:17px;color:#111;font-weight:bold;letter-spacing:-0.715px;">Date of birth</div>
<div class="t" style="left:635px;top:603.11px;font-size:17px;line-height:17px;color:#111;font-weight:normal;-webkit-text-stroke:0.2px #111;letter-spacing:-0.569px;">23 April 1990</div>
<div class="t" style="left:635px;top:634.11px;font-size:17px;line-height:17px;color:#111;font-weight:bold;letter-spacing:-0.971px;">Place of birth</div>
<div class="t" style="left:635px;top:655.61px;font-size:17px;line-height:17px;color:#111;font-weight:normal;-webkit-text-stroke:0.2px #111;letter-spacing:-0.400px;">Munich</div>
<div class="t" style="left:7.5px;top:781.84px;font-size:12px;line-height:12px;color:#444;font-weight:normal;letter-spacing:-0.525px;">Page 1 of 2</div>
<div class="t" style="left:84.4px;top:781.34px;font-size:12px;line-height:12px;color:#444;font-weight:normal;letter-spacing:-0.438px;">559 words</div>
<svg class="r" style="left:156px;top:780px;" width="15" height="14" viewBox="0 0 15 14"><path d="M0.5 1.5 H5 C6.5 1.5 7 2.5 7 3.5 V13 C7 12 6 11.5 5 11.5 H0.5 Z M7 3.5 C7 2.5 7.5 1.5 9 1.5 H10" fill="none" stroke="#666"/><path d="M9 5 L14 11 M14 5 L9 11" stroke="#666" stroke-width="1.1"/></svg>
<div class="t" style="left:188.4px;top:781.34px;font-size:12px;line-height:12px;color:#444;font-weight:normal;letter-spacing:-0.268px;">English</div>
<svg class="r" style="left:1005px;top:780px;" width="15" height="15" viewBox="0 0 15 15"><path d="M0.5 1.5 H6 L7.5 3 L9 1.5 H14.5 V12.5 H9 L7.5 14 L6 12.5 H0.5 Z M7.5 3 V13" fill="none" stroke="#666"/><path d="M2 4.5 H6 M2 7 H6 M2 9.5 H6 M9 4.5 H13 M9 7 H13 M9 9.5 H13" stroke="#666"/></svg>
<div class="r" style="left:1032px;top:778px;width:38px;height:22px;background:#c6c6c6;"></div>
<svg class="r" style="left:1044px;top:781px;" width="15" height="14" viewBox="0 0 15 14"><rect x="0.5" y="0.5" width="13" height="12" fill="none" stroke="#555"/><path d="M3 3.5 H11 M3 6 H11 M3 8.5 H11 M3 10.5 H11" stroke="#555"/></svg>
<svg class="r" style="left:1082px;top:781px;" width="15" height="15" viewBox="0 0 15 15"><path d="M0.5 0.5 H11.5 V6 M0.5 0.5 V12.5 H6" fill="none" stroke="#666"/><path d="M2.5 3 H9.5 M2.5 5.5 H8 M2.5 8 H5" stroke="#666"/><circle cx="10.5" cy="10.5" r="4" fill="#666"/><path d="M8.5 9 C10 9.5 10 11 11 12 M12 8 C11.5 9.5 13 10 14 10" stroke="#f1f1f1" stroke-width="0.8" fill="none"/></svg>
<div class="r" style="left:1113px;top:787px;width:6px;height:2px;background:#555;"></div>
<div class="r" style="left:1123px;top:788px;width:100px;height:1px;background:#a0a0a0;"></div>
<div class="r" style="left:1173px;top:785px;width:1px;height:6px;background:#a0a0a0;"></div>
<div class="r" style="left:1175px;top:782px;width:5px;height:11px;background:#6e6e6e;"></div>
<svg class="r" style="left:1226px;top:783px;" width="9" height="9" viewBox="0 0 9 9"><path d="M4.5 0 V9 M0 4.5 H9" stroke="#555" stroke-width="1.6"/></svg>
<div class="t" style="left:1245.5px;top:782.27px;font-size:11.5px;line-height:11.5px;color:#444;font-weight:normal;letter-spacing:-1.167px;">130%</div>
</body></html>
